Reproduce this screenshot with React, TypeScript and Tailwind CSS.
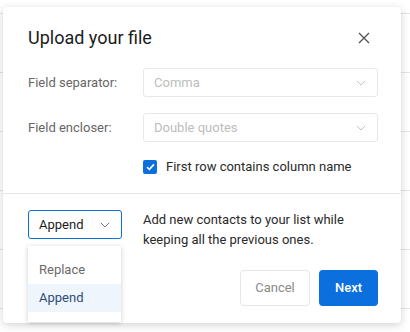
import * as React from "react";

function Chevron({ className }: { className?: string }) {
    return (
        <svg width="10" height="6" viewBox="0 0 10 6" fill="none" className={className}>
            <polyline points="0.8,0.8 5,5 9.2,0.8" stroke="currentColor" strokeWidth="1" />
        </svg>
    );
}

function FieldRow({ label, value }: { label: string; value: string }) {
    return (
        <div className="flex items-center">
            <span className="w-[115px] text-[13px] text-[#666]">{label}</span>
            <div className="flex h-[29px] flex-1 items-center justify-between rounded-[3px] border border-[#e8e8e8] pl-[10px] pr-[11px]">
                <span className="text-[13px] text-[#bdbdbd]">{value}</span>
                <Chevron className="text-[#c4c4c4]" />
            </div>
        </div>
    );
}

export default function App() {
    return (
        <div className="relative h-[332px] w-[410px] overflow-hidden bg-white font-['Roboto',sans-serif]">
            {/* page behind the dialog */}
            <div className="h-[14px] border-b border-[#e4e4e4]"></div>
            {[0, 1, 2, 3, 4].map((i) => (
                <div key={i} className="h-[59px] border-b border-[#e4e4e4]"></div>
            ))}

            {/* dialog */}
            <div className="absolute left-[3px] top-[7px] flex h-[316px] w-[398px] flex-col rounded-[4px] bg-white shadow-[0_2px_8px_rgba(0,0,0,0.18)]">
                <div className="flex flex-col pl-[25px] pr-[23px] pt-[17px]">
                    <div className="flex h-[28px] items-center justify-between">
                        <h1 className="text-[18px] leading-[28px] text-[#1b1b1b]">Upload your file</h1>
                        <div className="mr-[2px] flex h-[24px] w-[24px] items-center justify-center text-[#555]">
                            <svg width="12" height="12" viewBox="0 0 12 12">
                                <path d="M1 1L11 11M11 1L1 11" stroke="currentColor" strokeWidth="1.4" />
                            </svg>
                        </div>
                    </div>

                    <div className="mt-[16px] flex flex-col gap-[16px]">
                        <FieldRow label="Field separator:" value="Comma" />
                        <FieldRow label="Field encloser:" value="Double quotes" />
                    </div>

                    <div className="mt-[15px] flex h-[20px] items-center pl-[115px]">
                        <span className="flex h-[14px] w-[14px] items-center justify-center rounded-[2px] bg-[#0b70dd]">
                            <svg width="9" height="8" viewBox="0 0 9 8" fill="none">
                                <polyline points="1,4.2 3.4,6.4 8,1.4" stroke="white" strokeWidth="1.6" />
                            </svg>
                        </span>
                        <span className="ml-[9px] text-[13px] text-[#2a2a2a]">First row contains column name</span>
                    </div>
                </div>

                <div className="mt-[16px] h-px bg-[#e6e6e6]"></div>

                <div className="flex flex-1 flex-col pl-[25px] pr-[23px] pt-[16px]">
                    <div className="flex">
                        <div className="relative w-[115px]">
                            <div className="flex h-[29px] w-[94px] items-center justify-between rounded-[3px] border border-[#0b70dd] pl-[10px] pr-[11px]">
                                <span className="text-[13px] text-[#1b1b1b]">Append</span>
                                <Chevron className="text-[#777]" />
                            </div>
                            <div className="absolute left-0 top-[36px] z-10 flex w-[93px] flex-col bg-white py-[10px] shadow-[0_1px_5px_rgba(0,0,0,0.2)]">
                                <div className="flex h-[28px] items-center pl-[11px] text-[13px] text-[#6b6b6b]">Replace</div>
                                <div className="flex h-[28px] items-center bg-[#eef5fd] pl-[11px] text-[13px] text-[#2d4b78]">Append</div>
                            </div>
                        </div>
                        <p className="text-[13px] leading-[20px] text-[#2a2a2a]">
                            Add new contacts to your list while
                            <br />
                            keeping all the previous ones.
                        </p>
                    </div>

                    <div className="mt-[20px] flex justify-end gap-[9px]">
                        <button className="h-[36px] w-[70px] rounded-[4px] border border-[#e6e6e6] text-[13px] text-[#8a8a8a]">Cancel</button>
                        <button className="h-[36px] w-[59px] rounded-[4px] bg-[#0b70dd] text-[13px] font-medium text-white">Next</button>
                    </div>
                </div>
            </div>
        </div>
    );
}
